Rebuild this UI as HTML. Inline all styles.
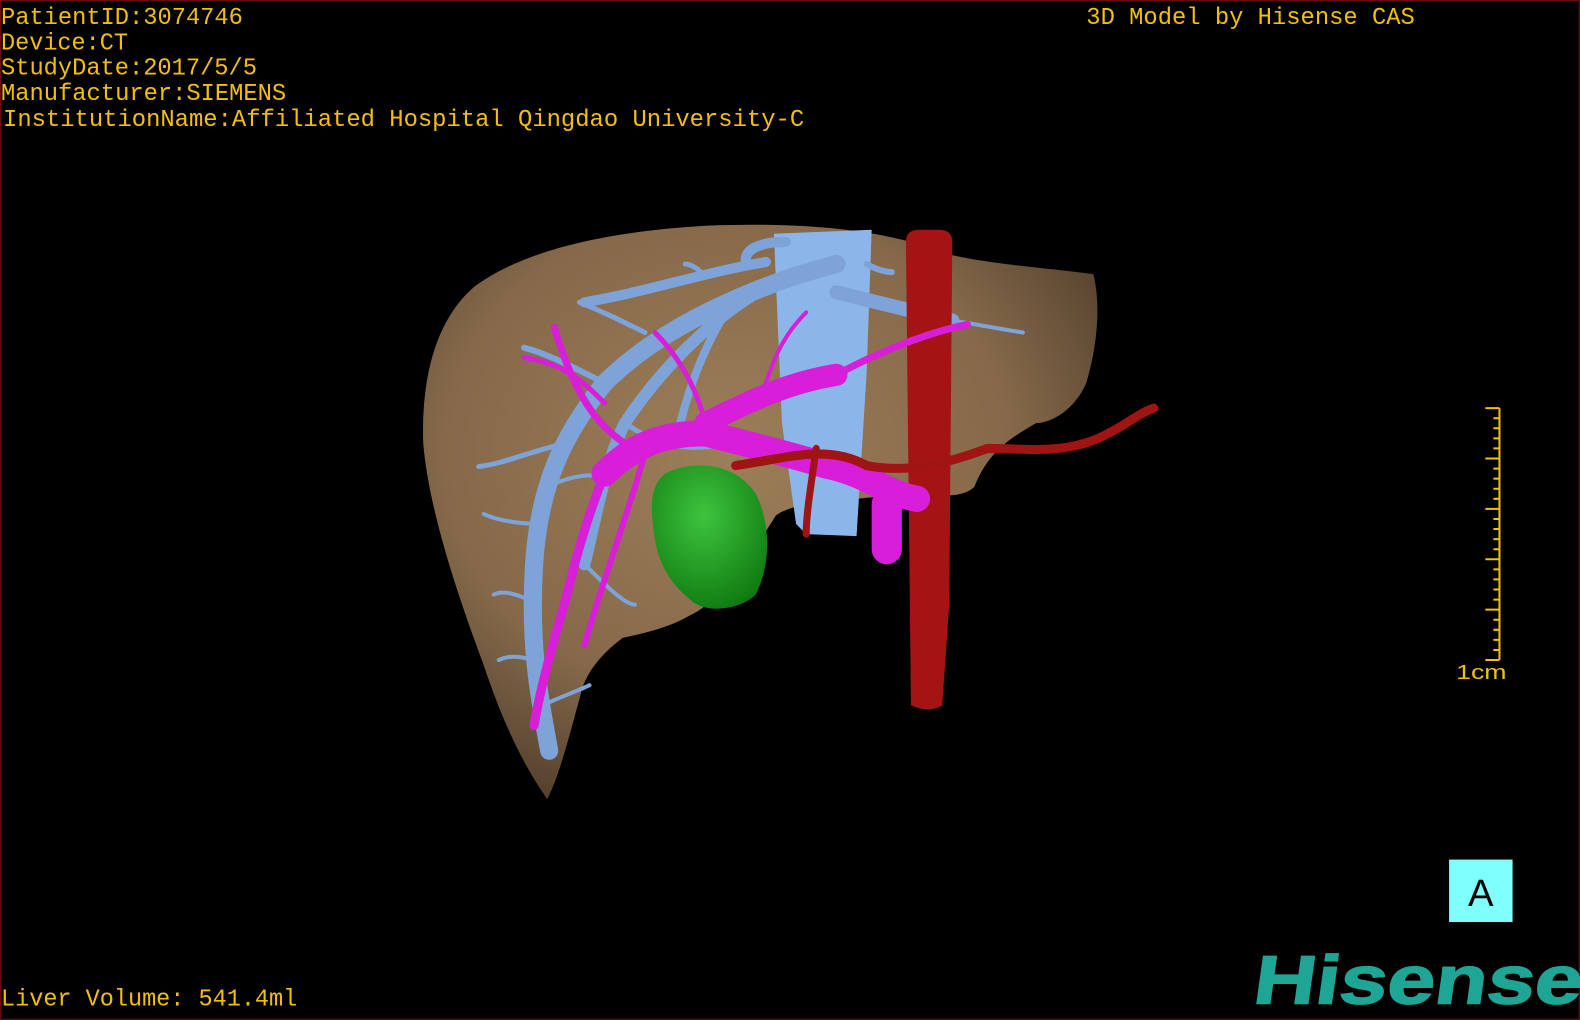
<!DOCTYPE html>
<html><head><meta charset="utf-8"><style>
html,body{margin:0;padding:0;background:#000;width:1580px;height:1020px;overflow:hidden}
svg{display:block}
</style></head><body>
<svg width="1580" height="1020" viewBox="0 0 1580 1020" xmlns="http://www.w3.org/2000/svg">
<defs>
<radialGradient id="lv" cx="0.45" cy="0.4" r="0.7">
<stop offset="0" stop-color="#9c7e58"/><stop offset="0.6" stop-color="#86694a"/><stop offset="1" stop-color="#4a3a28"/>
</radialGradient>
<radialGradient id="gr" cx="0.45" cy="0.35" r="0.7">
<stop offset="0" stop-color="#3ec43e"/><stop offset="1" stop-color="#0f7a10"/>
</radialGradient>
</defs>
<rect x="0.5" y="0.5" width="1579" height="1019" fill="#000" stroke="#6a0a0a" stroke-width="1.5"/>
<g transform="scale(1.0077)">
<path d="M543,793 C520,760 500,720 480,660 C450,580 425,500 420,440 C418,380 430,320 470,285 C520,248 600,230 700,224 C800,220 880,228 940,252 C980,262 1040,266 1085,272 C1092,300 1090,340 1078,380 C1065,410 1040,420 1028,420 C1000,436 980,450 967,483 C955,495 930,492 900,490 L800,500 C780,505 770,510 769,513 C740,560 710,600 684,611 C660,625 630,630 618,633 C595,650 580,670 576,690 C565,730 555,770 543,793 Z" fill="url(#lv)"/>
<path d="M768,232 L865,228 L860,370 L850,532 L800,530 L790,520 L776,420 Z" fill="#8cb6ea"/>
<g stroke="#7ea3d8" stroke-linecap="round" fill="none">
<path d="M830,262 C760,280 660,320 600,380 C560,430 535,480 530,560 C525,640 535,690 545,745" stroke-width="18"/>
<path d="M790,270 C720,300 660,360 620,420 C600,460 590,520 580,560" stroke-width="12"/>
<path d="M760,260 C700,270 640,290 580,300" stroke-width="10"/>
<path d="M830,290 C870,300 910,310 945,318" stroke-width="14"/>
<path d="M720,310 C690,360 680,400 670,440" stroke-width="8"/>
<path d="M600,380 C560,360 540,350 520,345" stroke-width="6"/>
<path d="M560,440 C520,450 500,460 475,463" stroke-width="5"/>
<path d="M540,520 C510,520 490,515 480,510" stroke-width="4"/>
<path d="M535,600 C515,590 500,585 490,590" stroke-width="4"/>
<path d="M620,420 C650,440 680,450 720,440" stroke-width="5"/>
<path d="M580,560 C600,580 620,600 630,600" stroke-width="4"/>
<path d="M930,318 C935,340 935,360 930,380" stroke-width="6"/>
<path d="M945,318 C970,322 990,326 1015,330" stroke-width="4"/>
<path d="M740,258 C740,245 760,240 780,240" stroke-width="10"/>
<path d="M860,262 C870,268 880,270 885,270" stroke-width="6"/>
<path d="M540,660 C520,650 505,650 495,655" stroke-width="4"/>
<path d="M538,700 C560,690 575,685 585,680" stroke-width="4"/>
<path d="M550,480 C575,470 590,470 610,475" stroke-width="4"/>
<path d="M640,330 C620,320 600,310 575,300" stroke-width="5"/>
<path d="M700,275 C690,262 680,262 680,262" stroke-width="5"/>
</g>
<path d="M899,240 Q899,228 912,228 L932,228 Q945,228 945,240 L942,600 L935,700 Q922,708 904,700 Z" fill="#a51414"/>
<g stroke="#d81ed8" stroke-linecap="round" fill="none">
<path d="M910,495 C880,490 860,470 820,462 C780,450 740,440 700,430 C660,430 630,440 600,470" stroke-width="26"/>
<path d="M880,500 L880,545" stroke-width="30"/>
<path d="M700,420 C740,400 780,380 830,372" stroke-width="22"/>
<path d="M830,372 C870,350 920,330 960,322" stroke-width="7"/>
<path d="M600,470 C580,520 570,560 560,600 C545,650 535,690 530,720" stroke-width="9"/>
<path d="M640,450 C620,520 600,570 580,640" stroke-width="6"/>
<path d="M620,440 C590,420 570,390 550,325" stroke-width="7"/>
<path d="M600,400 C580,380 560,360 520,355" stroke-width="5"/>
<path d="M700,420 C690,380 670,350 650,330" stroke-width="5"/>
<path d="M760,380 C770,350 780,330 800,310" stroke-width="4"/>
</g>
<g stroke="#a01414" stroke-linecap="round" fill="none">
<path d="M730,462 C780,455 820,440 860,462 C900,470 940,460 980,445 C1020,445 1060,452 1100,430 C1120,420 1130,410 1145,405" stroke-width="9"/>
<path d="M810,445 C805,480 800,510 800,530" stroke-width="7"/>
</g>
<path d="M660,470 C690,455 730,460 750,490 C765,520 765,560 750,590 C735,605 700,610 685,595 C660,575 650,550 648,520 C645,495 648,480 660,470 Z" fill="url(#gr)"/>
<g font-family="'Liberation Mono', monospace" font-size="24" fill="#f2c00c">
<text x="1" y="24" textLength="240" lengthAdjust="spacingAndGlyphs">PatientID:3074746</text>
<text x="1" y="49" textLength="126" lengthAdjust="spacingAndGlyphs">Device:CT</text>
<text x="1" y="74" textLength="254" lengthAdjust="spacingAndGlyphs">StudyDate:2017/5/5</text>
<text x="1" y="99" textLength="283" lengthAdjust="spacingAndGlyphs">Manufacturer:SIEMENS</text>
<text x="3" y="125" textLength="795" lengthAdjust="spacingAndGlyphs">InstitutionName:Affiliated Hospital Qingdao University-C</text>
<text x="1078" y="24" textLength="326" lengthAdjust="spacingAndGlyphs">3D Model by Hisense CAS</text>
<text x="1" y="998" textLength="294" lengthAdjust="spacingAndGlyphs">Liver Volume: 541.4ml</text>
</g>
<g stroke="#f2c00c" stroke-width="2">
<line x1="1488" y1="405" x2="1488" y2="655"/>
<path d="M1474,405H1488M1474,455H1488M1474,505H1488M1474,555H1488M1474,605H1488M1474,655H1488"/>
<path d="M1482,415H1488M1482,425H1488M1482,435H1488M1482,445H1488M1482,465H1488M1482,475H1488M1482,485H1488M1482,495H1488M1482,515H1488M1482,525H1488M1482,535H1488M1482,545H1488M1482,565H1488M1482,575H1488M1482,585H1488M1482,595H1488M1482,615H1488M1482,625H1488M1482,635H1488M1482,645H1488"/>
</g>
<text x="1445" y="674" font-family="'Liberation Sans', sans-serif" font-size="20" fill="#f2c00c" textLength="50" lengthAdjust="spacingAndGlyphs">1cm</text>
<rect x="1438" y="853" width="63" height="62" fill="#80ffff"/>
<text x="1469.5" y="899" text-anchor="middle" font-family="'Liberation Sans', sans-serif" font-size="38" fill="#000">A</text>
<g transform="translate(1240,996) skewX(-8)">
<text x="2" y="0" font-family="'Liberation Sans', sans-serif" font-weight="bold" font-size="68" fill="#1fa595" stroke="#1fa595" stroke-width="1.5" textLength="326" lengthAdjust="spacingAndGlyphs">Hisense</text>
</g>
</g>
</svg>
</body></html>
